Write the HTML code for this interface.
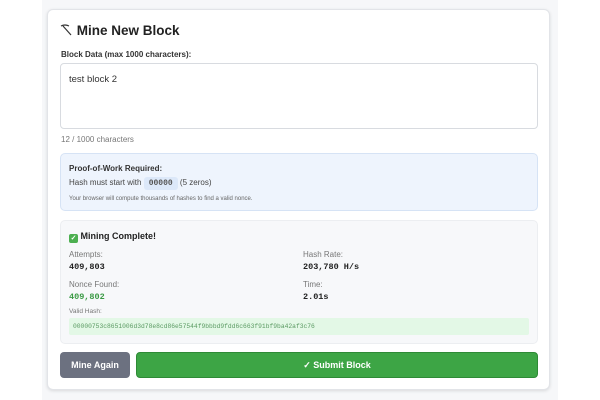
<!DOCTYPE html>
<html><head><style>
*{box-sizing:border-box;margin:0;padding:0}
body{width:600px;height:400px;overflow:hidden;background:#fff;font-family:"Liberation Sans",sans-serif;color:#222;position:relative}
.band{position:absolute;left:42px;top:0;width:516px;height:400px;background:#f6f7f9}
.card{position:absolute;left:47px;top:9px;width:503px;height:381px;background:#fff;border:1px solid #e2e4e8;border-radius:6px;box-shadow:0 1px 3px rgba(0,0,0,.12)}
.abs{position:absolute}
h1{position:absolute;left:12px;top:13px;font-size:13.5px;font-weight:bold;color:#222}
.lbl{left:13px;top:40px;font-size:8px;font-weight:bold;color:#333}
.ta{left:12px;top:53px;width:478px;height:66px;border:1px solid #d8dbe0;border-radius:4px;padding:10px 8px;font-size:9.5px;color:#333}
.cnt{left:13px;top:125px;font-size:8px;color:#777}
.pow{left:12px;top:143px;width:478px;height:58px;background:#eef4fd;border:1px solid #d6e3f5;border-radius:5px}
.res{left:12px;top:210px;width:478px;height:124px;background:#f7f8fa;border:1px solid #eceef1;border-radius:5px}
.mono{font-family:"Liberation Mono",monospace}
.k{font-size:8px;color:#777}
.v{font-size:8.5px;font-weight:bold}
.btn1{left:12px;top:342px;width:70px;height:26px;background:#6c7180;border-radius:4px;color:#fff;font-size:9px;font-weight:bold;text-align:center;line-height:26px}
.btn2{left:88px;top:342px;width:402px;height:26px;background:#3da545;border:1px solid #2e8a36;border-radius:4px;color:#fff;font-size:9px;font-weight:bold;text-align:center;line-height:24px}
</style></head><body>
<div class="band"></div>
<div class="card">
<h1><svg width="13" height="12" viewBox="0 0 13 12" style="vertical-align:-1px"><path d="M1 2 Q5 0 9 2" stroke="#333" stroke-width="1.2" fill="none"/><path d="M3 2 L11 11" stroke="#333" stroke-width="1.2"/></svg> Mine New Block</h1>
<div class="abs lbl">Block Data (max 1000 characters):</div>
<div class="abs ta">test block 2</div>
<div class="abs cnt">12 / 1000 characters</div>
<div class="abs pow">
 <div class="abs" style="left:8px;top:10px;font-size:8px;font-weight:bold;color:#333">Proof-of-Work Required:</div>
 <div class="abs" style="left:8px;top:24px;font-size:8px;color:#444">Hash must start with <span class="mono" style="background:#dce8f9;padding:2px 5px;border-radius:3px;color:#555;font-weight:bold">00000</span> (5 zeros)</div>
 <div class="abs" style="left:8px;top:42px;font-size:6px;color:#666">Your browser will compute thousands of hashes to find a valid nonce.</div>
</div>
<div class="abs res">
 <div class="abs" style="left:8px;top:10px;font-size:9px;font-weight:bold"><span style="display:inline-block;width:9px;height:9px;background:#4caf50;border-radius:2px;color:#fff;font-size:7px;line-height:9px;text-align:center;vertical-align:-1px">✓</span> Mining Complete!</div>
 <div class="abs k" style="left:8px;top:29px">Attempts:</div>
 <div class="abs v mono" style="left:8px;top:41px">409,803</div>
 <div class="abs k" style="left:242px;top:29px">Hash Rate:</div>
 <div class="abs v mono" style="left:242px;top:41px">203,780 H/s</div>
 <div class="abs k" style="left:8px;top:59px">Nonce Found:</div>
 <div class="abs v mono" style="left:8px;top:71px;color:#3a9a44">409,802</div>
 <div class="abs k" style="left:242px;top:59px">Time:</div>
 <div class="abs v mono" style="left:242px;top:71px">2.01s</div>
 <div class="abs" style="left:8px;top:87px;font-size:6.5px;color:#777">Valid Hash:</div>
 <div class="abs mono" style="left:8px;top:97px;width:460px;height:17px;background:#e3f8e6;border-radius:2px;font-size:6.3px;color:#5a9a62;line-height:17px;padding-left:4px">00000753c8651006d3d78e8cd86e57544f9bbbd9fdd6c663f91bf9ba42af3c76</div>
</div>
<div class="abs btn1">Mine Again</div>
<div class="abs btn2">✓ Submit Block</div>
</div>
</body></html>
